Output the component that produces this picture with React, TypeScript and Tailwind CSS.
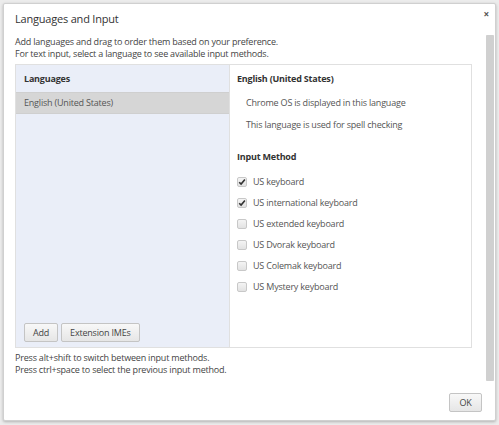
import React from "react";

const methods = [
  { name: "US keyboard", checked: true },
  { name: "US international keyboard", checked: true },
  { name: "US extended keyboard", checked: false },
  { name: "US Dvorak keyboard", checked: false },
  { name: "US Colemak keyboard", checked: false },
  { name: "US Mystery keyboard", checked: false },
];

function Checkbox({ checked }: { checked: boolean }) {
  return (
    <span className="flex h-[10px] w-[10px] items-center justify-center rounded-[2px] border border-[#c8c8c8] bg-gradient-to-b from-[#f4f4f4] to-[#e2e2e2]">
      {checked && (
        <svg width="8" height="8" viewBox="0 0 8 8">
          <path d="M1.2 4.2 L3.1 6.1 L6.9 1.4" fill="none" stroke="#333" strokeWidth="1.6" />
        </svg>
      )}
    </span>
  );
}

export default function App() {
  return (
    <div
      className="h-[425px] w-[499px] bg-[#ececec] p-[3px] text-[#444] tracking-[-0.2px]"
      style={{ fontFamily: '"Open Sans", sans-serif' }}
    >
      <div className="relative flex h-[418px] flex-col rounded-[2px] border border-[#d0d0d0] bg-white pl-[11px] pr-[11px] shadow-[0_1px_3px_rgba(0,0,0,0.25)]">
        {/* Title */}
        <div className="flex h-[31px] items-center text-[11px] text-[#333]">Languages and Input</div>
        <button className="absolute right-[6px] top-[3px] text-[10px] font-bold text-[#555]">×</button>

        {/* Scrollbar */}
        <div className="absolute right-[1px] top-[31px] h-[346px] w-[8px] bg-[#f1f1f1]">
          <div className="h-full w-full rounded-[1px] bg-[#d0d0d0]" />
        </div>

        <div className="mt-[1px] text-[9px] leading-[12px] text-[#444]">
          <div>Add languages and drag to order them based on your preference.</div>
          <div>For text input, select a language to see available input methods.</div>
        </div>

        {/* Panel */}
        <div className="mt-[4px] mr-[12px] flex h-[284px] border border-[#e0e0e0]">
          <div className="flex w-[213px] flex-col bg-[#eaeef8]">
            <div className="flex h-[27px] items-center px-[8px] text-[9px] font-bold text-[#333]">Languages</div>
            <div className="flex h-[22px] items-center border-y border-[#cfcfcf] bg-[#d6d6d6] px-[8px] text-[9px] text-[#555]">
              English (United States)
            </div>
            <div className="flex-1" />
            <div className="flex gap-[3px] px-[8px] pb-[5px]">
              <button className="h-[19px] rounded-[2px] border border-[#c4c4c4] bg-gradient-to-b from-[#f8f8f8] to-[#e6e6e6] px-[8px] text-[9px] text-[#444]">
                Add
              </button>
              <button className="h-[19px] rounded-[2px] border border-[#c4c4c4] bg-gradient-to-b from-[#f8f8f8] to-[#e6e6e6] px-[8px] text-[9px] text-[#444]">
                Extension IMEs
              </button>
            </div>
          </div>
          <div className="flex-1 border-l border-[#e0e0e0] bg-white px-[7px] text-[9px]">
            <div className="flex h-[27px] items-center font-bold text-[#333]">English (United States)</div>
            <div className="flex h-[22px] items-center pl-[9px] text-[#555]">Chrome OS is displayed in this language</div>
            <div className="flex h-[22px] items-center pl-[9px] text-[#555]">This language is used for spell checking</div>
            <div className="mt-[10px] flex h-[22px] items-center font-bold text-[#333]">Input Method</div>
            <div className="mt-[3px] flex flex-col">
              {methods.map((m, i) => (
                <label key={i} className="flex h-[21px] items-center gap-[6px] text-[#555]">
                  <Checkbox checked={m.checked} />
                  {m.name}
                </label>
              ))}
            </div>
          </div>
        </div>

        {/* Footer notes */}
        <div className="mt-[4px] text-[9px] leading-[12px] text-[#444]">
          <div>Press alt+shift to switch between input methods.</div>
          <div>Press ctrl+space to select the previous input method.</div>
        </div>

        <div className="flex flex-1 items-end justify-end pb-[8px] pr-[2px]">
          <button className="h-[19px] w-[33px] rounded-[2px] border border-[#c4c4c4] bg-gradient-to-b from-[#f8f8f8] to-[#e6e6e6] text-[9px] text-[#444]">
            OK
          </button>
        </div>
      </div>
    </div>
  );
}
